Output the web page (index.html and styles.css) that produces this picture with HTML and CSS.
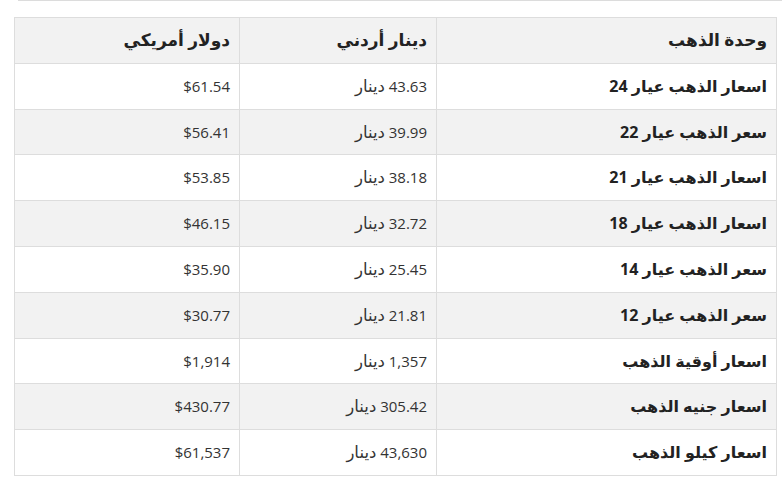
FILE: index.html
```html
<!DOCTYPE html>
<html lang="ar" dir="rtl">
<head>
<meta charset="utf-8">
<link rel="stylesheet" href="styles.css">
</head>
<body>
<div class="topbar"></div>
<table class="prices">
  <thead>
    <tr><th class="c1">وحدة الذهب</th><th class="c2">دينار أردني</th><th class="c3">دولار أمريكي</th></tr>
  </thead>
  <tbody>
    <tr><td class="name">اسعار الذهب عيار 24</td><td>43.63 <span class="cur">دينار</span></td><td>$61.54</td></tr>
    <tr><td class="name">سعر الذهب عيار 22</td><td>39.99 <span class="cur">دينار</span></td><td>$56.41</td></tr>
    <tr><td class="name">اسعار الذهب عيار 21</td><td>38.18 <span class="cur">دينار</span></td><td>$53.85</td></tr>
    <tr><td class="name">اسعار الذهب عيار 18</td><td>32.72 <span class="cur">دينار</span></td><td>$46.15</td></tr>
    <tr><td class="name">سعر الذهب عيار 14</td><td>25.45 <span class="cur">دينار</span></td><td>$35.90</td></tr>
    <tr><td class="name">سعر الذهب عيار 12</td><td>21.81 <span class="cur">دينار</span></td><td>$30.77</td></tr>
    <tr><td class="name">اسعار أوقية الذهب</td><td>1,357 <span class="cur">دينار</span></td><td>$1,914</td></tr>
    <tr><td class="name">اسعار جنيه الذهب</td><td>305.42 <span class="cur">دينار</span></td><td>$430.77</td></tr>
    <tr><td class="name">اسعار كيلو الذهب</td><td>43,630 <span class="cur">دينار</span></td><td>$61,537</td></tr>
  </tbody>
</table>
</body>
</html>
```
FILE: styles.css
```css
html, body {
  margin: 0;
  padding: 0;
  background: #fff;
}
body {
  font-family: "Open Sans", "DejaVu Sans", sans-serif;
  color: #333;
  font-size: 15px;
}
.topbar {
  height: 1px;
  background: #dcdcdc;
  margin-left: 18px;
  margin-right: 0;
}
.prices {
  border-collapse: collapse;
  margin: 16px 5px 0 14px;
  width: 763px;
  table-layout: fixed;
}
.prices th, .prices td {
  box-sizing: border-box;
  border: 1px solid #dddddd;
  padding: 12px 9px;
  line-height: 20.8px;
  text-align: right;
}
.prices th {
  background: #f2f2f2;
  font-weight: bold;
  color: #222;
  font-size: 17px;
}
.prices .c1 { width: 340px; }
.prices .c2 { width: 197px; }
.prices tbody tr:nth-child(even) td {
  background: #f2f2f2;
}
.prices td.name {
  font-weight: bold;
  color: #222;
  font-size: 16px;
}
.prices .cur {
  font-size: 16.5px;
}
```
